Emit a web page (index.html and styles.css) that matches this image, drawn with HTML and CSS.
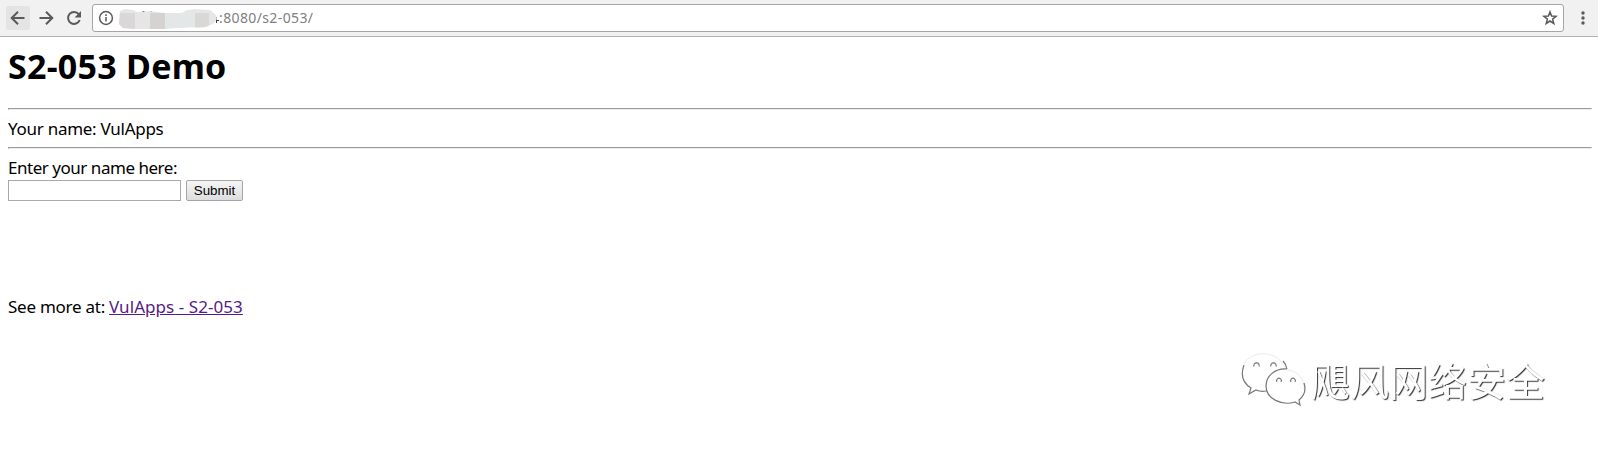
FILE: index.html
```html
<!DOCTYPE html>
<html lang="en">
<head>
<meta charset="utf-8">
<title>S2-053 Demo</title>
<link rel="stylesheet" href="styles.css">
</head>
<body>
<header class="toolbar">
  <div class="nav nav-active"><svg width="24" height="24" viewBox="0 0 24 24"><path d="M18.5 12H6M12 5.7L5.7 12l6.3 6.3"/></svg></div>
  <div class="nav"><svg width="24" height="24" viewBox="0 0 24 24"><path d="M5.5 12H18M12 5.7l6.3 6.3-6.3 6.3"/></svg></div>
  <div class="nav"><svg width="24" height="24" viewBox="0 0 24 24"><path d="M16.8 8.2A6 6 0 1 0 17.7 14"/><path class="solid" d="M19 5v6.4h-6.4z"/></svg></div>
  <div class="address">
    <svg class="info" width="16" height="16" viewBox="0 0 16 16"><circle cx="8" cy="8" r="6.4"/><path d="M8 7v4.6M8 4.2v1.7"/></svg>
    <svg class="mask" width="101" height="22" viewBox="0 0 101 22">
      <path d="M24.500 3.500h2M32 3.500h2" stroke="#234" stroke-width="1"/>
      <path d="M98.500 9v6M98 12.500h3" stroke="#444" stroke-width="1"/>
      <path fill="#e6e6e6" d="M2 3l5-2 8 1 4 2 13-1 15 2h16l6-3 8-1 15 1 6 5 1 4-3 4-7 4-10 1-6-1-14 1-12 1H17L5 20 1 16z"/>
      <path fill="#dad7d7" d="M2 5h15v16L5 20 1 16zM77 5h14v12l-5 2H77z"/>
      <path fill="#d5d2d1" d="M32 5h15v16H32z"/>
      <path fill="#e4e7e7" d="M47 6h14v14H47zM61 5h16v14l-16 1z"/>
    </svg>
    <span class="url">:8080/s2-053/</span>
    <svg class="star" width="16" height="16" viewBox="0 0 16 16"><path d="M8 1.900l1.600 4.200 4.500.2-3.500 2.800 1.200 4.400L8 11l-3.800 2.500 1.200-4.400-3.500-2.800 4.500-.2z"/></svg>
  </div>
  <svg class="menu" width="4" height="14" viewBox="0 0 4 14"><circle cx="2" cy="2" r="1.700"/><circle cx="2" cy="7" r="1.700"/><circle cx="2" cy="12" r="1.700"/></svg>
</header>
<main class="page">
  <h1 class="title">S2-053 Demo</h1>
  <hr class="rule">
  <p class="line name">Your name: VulApps</p>
  <hr class="rule">
  <form class="form">
    <label class="line prompt" for="name">Enter your name here:</label>
    <div class="controls"><input class="field" id="name" type="text"><button class="submit" type="button">Submit</button></div>
  </form>
  <p class="line more"><span class="see">See more at:</span><a class="link" href="#">VulApps - S2-053</a></p>
</main>
<div class="watermark">
  <svg class="wechat" width="66" height="58" viewBox="0 0 66 58">
    <path class="faint" d="M3 12C10-2 38-3 44 17M46 18c11 1 18 9 17 20"/>
    <path d="M3 13C-1 24 2 31 10 36L8 42l7-4q5 2 10 1M46 17q-1-5-4-8"/>
    <path d="M46 17C34 16 25 24 25 34c0 13 16 20 29 16l5 3-1-5c6-5 7-11 5-17"/>
    <path d="M13 14.500a2.700 2.700 0 1 1 5 0M30 14.500a2.700 2.700 0 1 1 5 0M36 30a2.400 2.400 0 1 1 4 0M50 30a2.400 2.400 0 1 1 4 0"/>
  </svg>
  <span class="brand" lang="zh-CN">飓风网络安全</span>
</div>
</body>
</html>
```
FILE: styles.css
```css
body {
  margin: 0;
  height: 453px;
  overflow: hidden;
  background: #fff;
  color: #000;
  font-family: "Noto Sans", "Open Sans", sans-serif;
}
.toolbar {
  display: flex;
  align-items: center;
  box-sizing: border-box;
  height: 37px;
  padding: 0 13px 1px 6px;
  background: #f1f1f1;
  border-bottom: 1px solid #b3b3b3;
}
.nav {
  width: 24px;
  height: 24px;
  margin-right: 4px;
  border-radius: 2px;
}
.nav-active { background: #e4e4e4; }
.nav svg { display: block; fill: none; stroke: #5a5a5a; stroke-width: 2; }
.nav .solid { fill: #5a5a5a; stroke: none; }
.address {
  display: flex;
  align-items: center;
  flex: 1;
  box-sizing: border-box;
  height: 28px;
  margin: 0 17px 0 2px;
  padding: 0 5px;
  background: #fff;
  border: 1px solid #a6a6a6;
  border-radius: 3px;
}
.info { fill: none; stroke: #5a5a5a; stroke-width: 1.5; }
.mask { margin: 2px 0 0 4px; }
.url {
  color: #808080;
  font: 14px/20px "Noto Sans", sans-serif;
  letter-spacing: .38px;
  white-space: nowrap;
}
.star { margin-left: auto; fill: none; stroke: #5a5a5a; stroke-width: 1.5; }
.menu { fill: #5a5a5a; }
.page { padding: 0 6px 0 8px; }
.title {
  margin: 7px 0 20px;
  font: 700 34px/44px "Noto Sans", sans-serif;
  letter-spacing: .25px;
}
.rule { margin: 0; border: 1px solid #9a9a9a; border-color: #9a9a9a #eee #eee #9a9a9a; }
.line { display: block; margin: 0; font-size: 17px; line-height: 21px; white-space: nowrap; }
.name { padding: 8px 0 8px; letter-spacing: -.27px; }
.prompt { padding-top: 8px; letter-spacing: -.47px; }
.controls { display: flex; gap: 5px; margin-top: 2px; }
.field {
  box-sizing: border-box;
  width: 173px;
  height: 21px;
  margin: 0;
  border: 1px solid #a9a9a9;
}
.submit {
  box-sizing: border-box;
  width: 57px;
  height: 21px;
  padding: 0;
  border: 1px solid #a6a6a6;
  border-radius: 2px;
  background: linear-gradient(#f5f5f5, #dddddd);
  color: #000;
  font: 13.33px/17px "Liberation Sans", sans-serif;
}
.more { display: flex; gap: 4px; margin-top: 95px; }
.see { letter-spacing: -.25px; }
.link { color: #551a8b; letter-spacing: .06px; text-decoration: underline; }
.watermark {
  position: absolute;
  left: 1241px;
  top: 352px;
  display: flex;
  align-items: flex-start;
  will-change: transform;
}
.wechat { fill: none; stroke: #777; stroke-width: 1.2; }
.wechat .faint { stroke: #e4e4e4; stroke-width: .7; }
.brand {
  margin: -2px 0 0 4px;
  color: #fff;
  font: 39px/58px "Noto Sans CJK SC", sans-serif;
  text-shadow: 1px 1px 1px #333;
  white-space: nowrap;
}
```
